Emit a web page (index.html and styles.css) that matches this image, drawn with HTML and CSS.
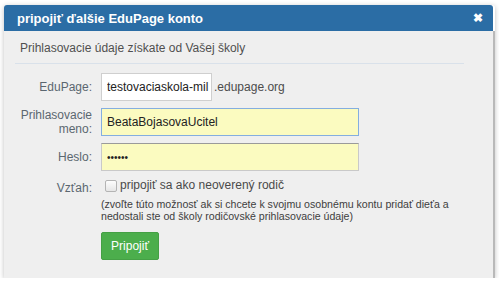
FILE: index.html
```html
<!DOCTYPE html>
<html lang="sk">
  <head>
    <meta charset="UTF-8" />
    <title>pripojiť ďalšie EduPage konto</title>
    <link rel="stylesheet" href="styles.css">
  </head>
  <body>
    <div class="dialog">
      <div class="dialog-head">
        <span class="dialog-title">pripojiť ďalšie EduPage konto</span>
        <span class="dialog-close">&#x2716;</span>
      </div>
      <div class="dialog-body">
        <p class="intro">Prihlasovacie údaje získate od Vašej školy</p>

        <div class="row">
          <label class="row-label" for="edupage">EduPage:</label>
          <div class="row-field">
            <input class="inp inp-short" id="edupage" type="text" value="testovaciaskola-mil" />
            <span class="domain">.edupage.org</span>
          </div>
        </div>

        <div class="row">
          <label class="row-label" for="meno">Prihlasovacie<br />meno:</label>
          <div class="row-field">
            <input class="inp inp-yellow inp-focus" id="meno" type="text" value="BeataBojasovaUcitel" />
          </div>
        </div>

        <div class="row">
          <label class="row-label" for="heslo">Heslo:</label>
          <div class="row-field">
            <input class="inp inp-yellow inp-pass" id="heslo" type="password" value="123456" />
          </div>
        </div>

        <div class="row row-check">
          <span class="row-label">Vzťah:</span>
          <div class="row-field col">
            <label class="check">
              <span class="box"></span>
              pripojiť sa ako neoverený rodič
            </label>
            <p class="hint">(zvoľte túto možnosť ak si chcete k svojmu osobnému kontu pridať dieťa a nedostali ste od školy rodičovské prihlasovacie údaje)</p>
            <button class="btn">Pripojiť</button>
          </div>
        </div>
      </div>
    </div>
  </body>
</html>
```

FILE: styles.css
```css
html,
body {
  margin: 0;
  padding: 0;
  background: #fff;
  font-family: "Liberation Sans", Arial, sans-serif;
}
.dialog {
  margin: 5px 0 0 4px;
  width: 491px;
  height: 273px;
  display: flex;
  flex-direction: column;
  box-shadow: 0 1px 5px rgba(0, 0, 0, 0.25);
  border-radius: 3px 3px 0 0;
}
.dialog-head {
  height: 26px;
  background: #2b6da5;
  color: #fff;
  display: flex;
  align-items: center;
  justify-content: space-between;
  padding: 0 10px 0 13px;
  border-radius: 3px 3px 0 0;
  margin-right: 2px;
}
.dialog-title {
  font-size: 13px;
  font-weight: bold;
}
.dialog-close {
  font-size: 12px;
  font-weight: bold;
}
.dialog-body {
  flex: 1;
  background: #efefef;
  padding: 0 29px 0 11px;
  border-right: 2px solid #b9b9b9;
}
.intro {
  margin: 0 0 9px;
  padding: 10px 5px 7px;
  font-size: 12px;
  line-height: 15px;
  color: #4f4f4f;
  border-bottom: 1px solid #d9e1ea;
}
.row {
  display: flex;
  align-items: center;
  margin-bottom: 7px;
}
.row-label {
  flex-shrink: 0;
  width: 77px;
  margin-right: 9px;
  text-align: right;
  font-size: 12px;
  line-height: 14px;
  color: #5b6770;
}
.row-field {
  display: flex;
  align-items: center;
}
.inp {
  box-sizing: border-box;
  height: 28px;
  width: 258px;
  padding: 0 5px;
  font-family: "Liberation Sans", Arial, sans-serif;
  font-size: 12px;
  color: #222;
  background: #fff;
  border: 1px solid #cfcfcf;
  outline: none;
}
.inp-short {
  width: 111px;
  padding-right: 2px;
}
.inp-yellow {
  background: #fbfbc0;
  border-color: #c9c9c9;
  border-top-color: #9a9a9a;
}
.inp-focus {
  border-color: #84aee0;
}
.inp-pass {
  font-size: 10px;
}
.domain {
  margin-left: 2px;
  font-size: 12px;
  color: #4c4c4c;
}
.row-check {
  align-items: flex-start;
  margin-top: 4px;
}
.row-check .row-label {
  padding-top: 3px;
}
.col {
  flex-direction: column;
  align-items: flex-start;
}
.check {
  display: flex;
  align-items: center;
  font-size: 12px;
  line-height: 15px;
  color: #4a4a4a;
}
.box {
  box-sizing: border-box;
  width: 12px;
  height: 12px;
  margin: 0 3px 0 4px;
  border: 1px solid #b4b4b4;
  border-radius: 2px;
  background: linear-gradient(#fdfdfd, #e6e6e6);
}
.hint {
  margin: 5px 0 0;
  font-size: 10.6px;
  line-height: 12px;
  color: #3e3e3e;
}
.btn {
  margin-top: 10px;
  height: 28px;
  width: 58px;
  padding: 0;
  background: #4cae4c;
  color: #fff;
  border: 1px solid #45a045;
  border-radius: 2px;
  font-family: "Liberation Sans", Arial, sans-serif;
  font-size: 12px;
}
```
